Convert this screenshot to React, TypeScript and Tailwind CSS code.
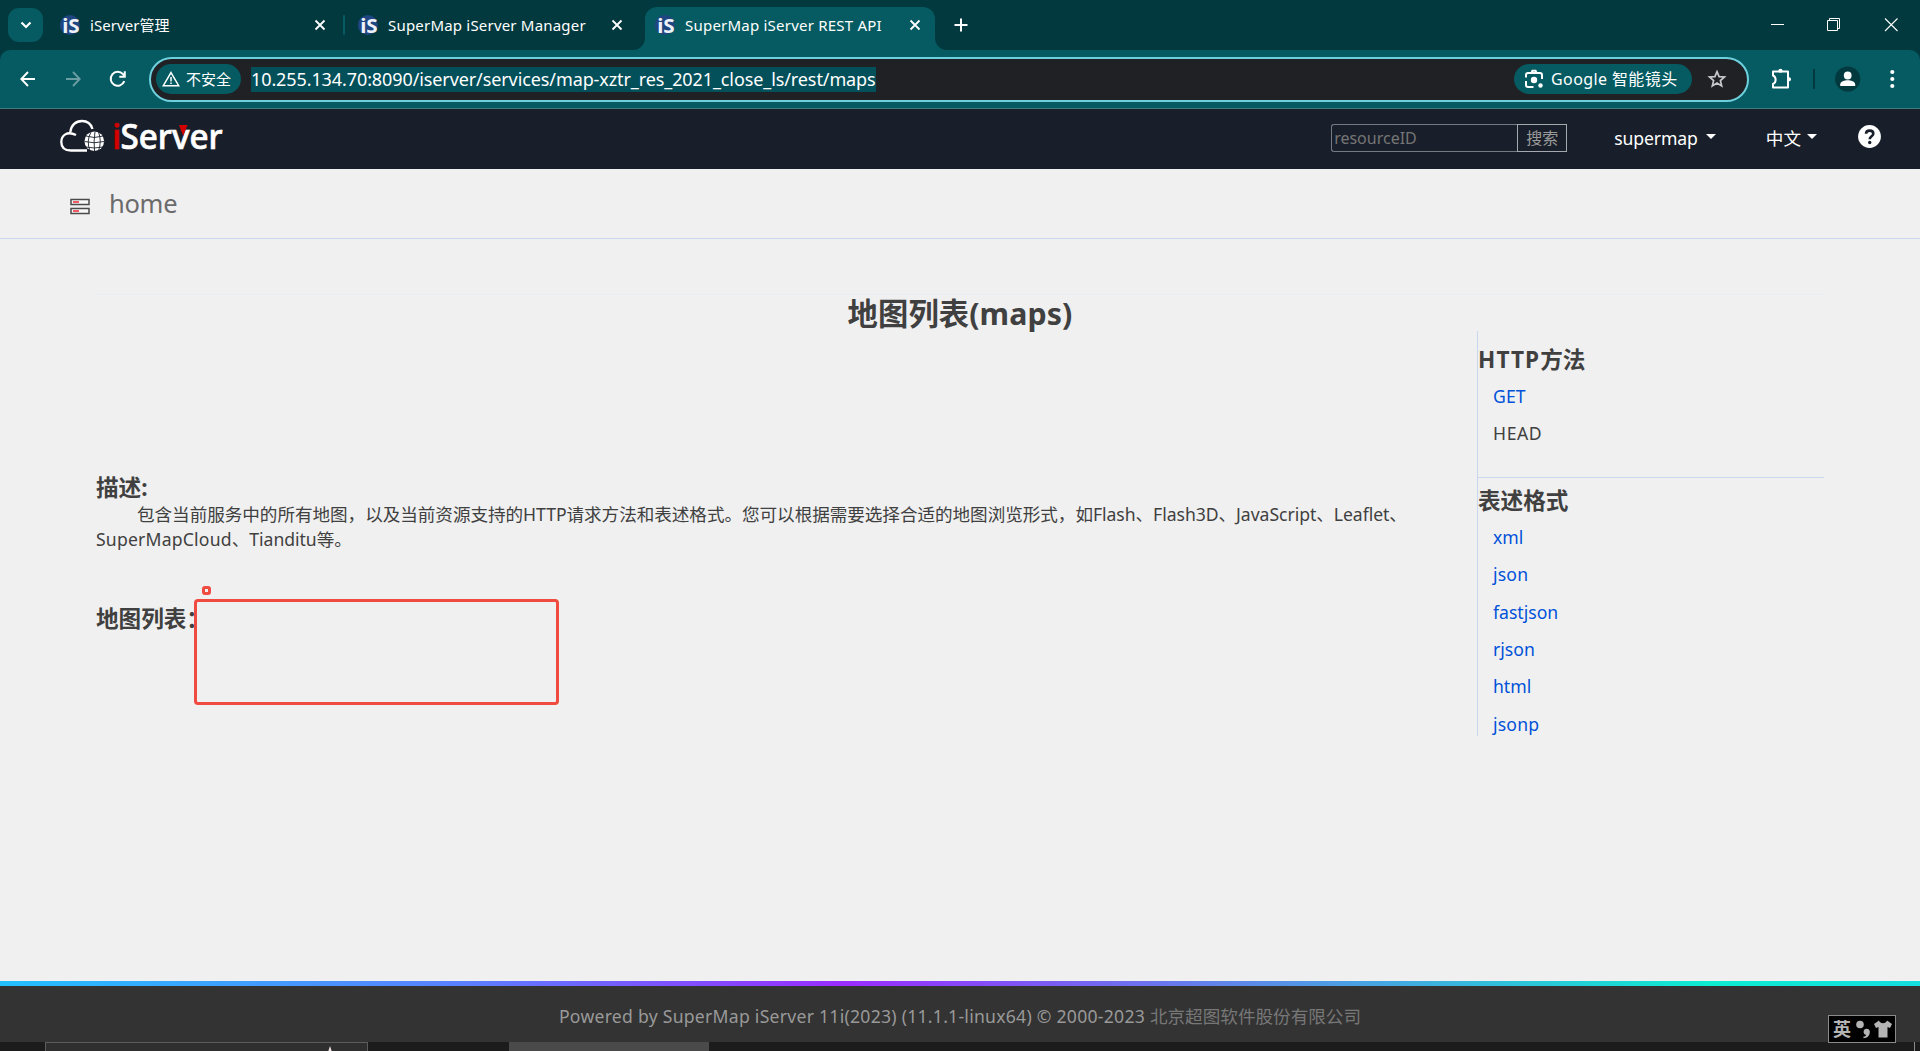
import type { ReactNode } from "react";
import clsx from "clsx";

const tabs = [
  { title: "iServer管理", box: "w-[292px] pl-2 pr-4", text: "tracking-[0.05px]", active: false },
  { title: "SuperMap iServer Manager", box: "w-[301px] pl-[14px] pr-5", text: "tracking-[0.2px]", active: false },
  { title: "SuperMap iServer REST API", box: "w-[290px] pl-[10px] pr-3", text: "tracking-[0.22px]", active: true },
];

const methods = [
  { name: "GET", link: true, text: "tracking-[0.1px]" },
  { name: "HEAD", link: false, text: "tracking-[0.6px]" },
];

const formats = [
  { name: "xml", link: true, text: "" },
  { name: "json", link: true, text: "tracking-[0.2px]" },
  { name: "fastjson", link: true, text: "" },
  { name: "rjson", link: true, text: "" },
  { name: "html", link: true, text: "" },
  { name: "jsonp", link: true, text: "tracking-[0.2px]" },
];

function Favicon() {
  return (
    <svg className="w-5 h-5 shrink-0 overflow-visible" viewBox="0 0 20 20">
      <circle cx="9.8" cy="10" r="10" fill="#1f4680" />
      <text x="2.2" y="18" fontFamily="Noto Sans, sans-serif" fontWeight="700" fontSize="20" fill="#eef2f8" textLength="17.5" lengthAdjust="spacingAndGlyphs">
        iS
      </text>
    </svg>
  );
}

function CloseIcon() {
  return (
    <svg className="w-4 h-4 shrink-0" viewBox="0 0 16 16" stroke="#fff" strokeWidth="1.8">
      <path d="M3.5 3.5l9 9M12.5 3.5l-9 9" />
    </svg>
  );
}

function TabStrip() {
  return (
    <div className="h-[50px] flex items-start">
      <div className="mt-2 ml-2 mr-[9px] w-[35px] h-[34px] rounded-[11px] bg-[#055b61] flex items-center justify-center">
        <svg className="w-3 h-3" viewBox="0 0 12 12" fill="none" stroke="#fff" strokeWidth="2.2">
          <path d="M1.5 3.5L6 8l4.5-4.5" />
        </svg>
      </div>
      {tabs.map((tab, i) => (
        <div key={tab.title} className="flex">
          {i === 1 && <div className="mt-[15px] w-0.5 h-5 -mr-px -ml-px bg-[#055b61] rounded-full" />}
          <div
            className={clsx(
              "relative mt-[7px] h-[43px] pb-[7px] flex items-center text-[15px] text-white",
              tab.box,
              tab.active && "bg-[#055b61] rounded-t-xl"
            )}
          >
            {tab.active && (
              <>
                <svg className="absolute bottom-0 -left-3 w-3 h-3" viewBox="0 0 12 12" fill="#055b61"><path d="M0 12A12 12 0 0 0 12 0V12Z" /></svg>
                <svg className="absolute bottom-0 -right-3 w-3 h-3" viewBox="0 0 12 12" fill="#055b61"><path d="M12 12A12 12 0 0 1 0 0V12Z" /></svg>
              </>
            )}
            <Favicon />
            <span className={clsx("ml-[10px] flex-1 whitespace-nowrap leading-5", tab.text)}>{tab.title}</span>
            <CloseIcon />
          </div>
        </div>
      ))}
      <svg className="mt-[17px] ml-[18px] w-4 h-4" viewBox="0 0 16 16" stroke="#fff" strokeWidth="2">
        <path d="M8 1.5v13M1.5 8h13" />
      </svg>
      <div className="ml-auto mr-[21px] mt-[17px] flex gap-[42px]">
        <svg className="w-[15px] h-4" viewBox="0 0 15 16" stroke="#fff"><path d="M1 7.5h13" /></svg>
        <svg className="w-[15px] h-4" viewBox="0 0 15 16" fill="none" stroke="#fff"><path d="M0.5 3.5h10v10h-10zM2.500 3.500v-2h10v10h-2" /></svg>
        <svg className="w-[15px] h-4" viewBox="0 0 15 16" stroke="#fff" strokeWidth="1.1"><path d="M1 1.500l12.500 12.500M13.500 1.500l-12.500 12.500" /></svg>
      </div>
    </div>
  );
}

function Toolbar() {
  return (
    <div className="h-[59px] rounded-t-[10px] bg-[#055b61] border-b border-[#3f7c80] flex items-center">
      <svg className="ml-5 w-4 h-4" viewBox="0 0 16 16" fill="none" stroke="#fff" strokeWidth="1.9"><path d="M15 8H1.500M8 1L1.300 8 8 15" /></svg>
      <svg className="ml-[29px] w-4 h-4" viewBox="0 0 16 16" fill="none" stroke="#6a9da1" strokeWidth="1.9"><path d="M1 8h13.500M8 1l6.700 7L8 15" /></svg>
      <svg className="ml-7 w-[18px] h-[18px]" viewBox="0 0 18 18" fill="none" stroke="#fff" strokeWidth="2">
        <path d="M15.300 11.200A7 7 0 1 1 14 4.200L15.800 6.200M15.800 1.200V6.700H10.300" />
      </svg>
      <div className="ml-[22px] w-[1600px] h-[45px] rounded-full border-2 border-[#6fd0dd] bg-[#202124] flex items-center pl-[5px] pr-[20px]">
        <div className="w-[85px] h-[30px] rounded-full bg-[#055b61] flex items-center text-white text-[15px]">
          <svg className="ml-[6px] mr-[6px] w-[18px] h-4" viewBox="0 0 18 16" fill="none" stroke="#fff" strokeWidth="1.5">
            <path d="M9 1.600L16.700 14.700H1.300ZM9 6v4.500M9 11.500v1.600" />
          </svg>
          <span className="leading-5">不安全</span>
        </div>
        <span className="ml-[10px] h-[25px] leading-[24px] w-[625px] bg-[#04505a] text-white text-[18px] tracking-[-0.1px] whitespace-nowrap">
          10.255.134.70:8090/iserver/services/map-xztr_res_2021_close_ls/rest/maps
        </span>
        <div className="ml-auto w-[178px] h-[30px] rounded-full bg-[#055b61] flex items-center text-white">
          <svg className="ml-[10px] w-5 h-5" viewBox="0 0 20 20" fill="none" stroke="#fff" strokeWidth="2">
            <path d="M2 8.500V6Q2 4 4 4H16Q18 4 18 6V10M2 12V16Q2 18 4 18H9.500" />
            <path d="M7.500 3L8.500 1.800h3L12.500 3" />
            <circle cx="10" cy="11" r="3.200" fill="#fff" stroke="none" />
            <circle cx="16.500" cy="16.500" r="2.200" fill="#fff" stroke="none" />
          </svg>
          <span className="ml-[7px] text-[16px] tracking-[0.4px] leading-5 whitespace-nowrap">Google 智能镜头</span>
        </div>
        <svg className="ml-[15px] w-5 h-5" viewBox="0 0 20 20" fill="none" stroke="#c7c9cb" strokeWidth="1.700">
          <path d="M10 2.600L12.100 7.600 17.500 8 13.400 11.600 14.700 17 10 14.100 5.300 17 6.600 11.600 2.500 8 7.900 7.600Z" />
        </svg>
      </div>
      <svg className="ml-[21px] w-6 h-6" viewBox="0 0 24 24" fill="none" stroke="#fff" strokeWidth="2">
        <path d="M3 4.500H18V20.500H3V17C6.500 15.500 6.500 10 3 8.500Z" strokeLinejoin="round" />
        <path d="M8.500 4.500a2 2.500 0 0 1 4 0ZM18 10.500a2.500 2 0 0 1 0 4Z" fill="#fff" stroke="none" />
        <circle cx="10.500" cy="3.800" r="2" fill="#fff" stroke="none" />
        <circle cx="19" cy="12.300" r="2" fill="#fff" stroke="none" />
      </svg>
      <div className="ml-[19px] w-0.5 h-5 bg-[#02393e]" />
      <svg className="ml-[20px] w-[26px] h-[26px]" viewBox="0 0 26 26">
        <circle cx="12.700" cy="13" r="12.600" fill="#02393e" />
        <circle cx="12.700" cy="9.500" r="3.900" fill="#fff" />
        <path d="M5.200 20V18.500C5.200 15.500 9.700 14.300 12.700 14.300S20.200 15.500 20.200 18.500V20Z" fill="#fff" />
      </svg>
      <svg className="ml-[28px] w-1.5 h-5" viewBox="0 0 6 20" fill="#fff">
        <circle cx="3.300" cy="3" r="2.100" /><circle cx="3.300" cy="10" r="2.100" /><circle cx="3.300" cy="17" r="2.100" />
      </svg>
    </div>
  );
}

function Logo() {
  return (
    <svg className="mt-[7px] ml-[58px] w-[168px] h-10" viewBox="58 116 168 40" fill="none">
      <path d="M76 135C67 130.500 61.300 135.500 61.300 142 61.300 148 65 150.500 71 150.500H87" stroke="#fff" strokeWidth="2.300" />
      <path d="M70.200 132.500C71 125 76 121 82 121 87 121 91 124 92.500 129" stroke="#fff" strokeWidth="2.300" />
      <circle cx="94.300" cy="141.300" r="9.800" fill="#fff" />
      <g stroke="#191f2a" strokeWidth="0.900">
        <path d="M86 136Q94 139 103 136M84.500 141.500Q94 144 104 141.500M86 147Q94 149 103 147" />
        <path d="M91 132Q86 141 90 151M95 131.500Q93.500 141 94.500 151M98.500 132Q102 141 98.500 151" />
      </g>
      <text y="149" fontFamily="Noto Sans, sans-serif" fontSize="34.500" fontWeight="500" fill="#fff" stroke="#fff" strokeWidth="0.700">
        <tspan x="112" fill="#d40000" stroke="#d40000">i</tspan>
        <tspan x="120.500" textLength="102" lengthAdjust="spacingAndGlyphs">Server</tspan>
      </text>
      <path d="M179 125H187.500L183.200 136Z" fill="#d40000" />
    </svg>
  );
}

function Caret() {
  return <span className="-mt-1 w-0 h-0 border-x-[5px] border-x-transparent border-t-[5px] border-t-white" />;
}

function SiteHeader() {
  return (
    <header className="h-[60px] bg-[#191f2a] flex items-start text-white text-[17.6px]">
      <Logo />
      <div className="ml-auto mt-[15px] flex h-7 text-[16px]">
        <div className="w-[186px] border border-r-0 border-[#767a82] rounded-l-[3px] pl-0.5 leading-[27px] text-[#757575]">resourceID</div>
        <div className="w-[50px] border border-[#a5a8ad] text-center leading-[26px] text-[#9b9b9b]">搜索</div>
      </div>
      <div className="ml-[47px] mt-4 flex items-center gap-2 leading-[26px]">
        <span className="tracking-[-0.1px]">supermap</span>
        <Caret />
      </div>
      <div className="ml-[50px] mt-4 flex items-center gap-[6px] leading-[26px]">
        <span>中文</span>
        <Caret />
      </div>
      <svg className="ml-[41px] mr-[39px] mt-4 w-[23px] h-[23px]" viewBox="0 0 23 23">
        <circle cx="11.500" cy="11.500" r="11.400" fill="#fff" />
        <path d="M8 8.800C8.200 4.500 15.300 4.700 15.300 8.700 15.300 11.200 11.700 11.300 11.700 14.200" fill="none" stroke="#191f2a" strokeWidth="2.600" />
        <circle cx="11.700" cy="17.500" r="1.700" fill="#191f2a" />
      </svg>
    </header>
  );
}

function SideList({ items }: { items: { name: string; link: boolean; text: string }[] }) {
  return (
    <ul className="mt-1 pl-[15px] text-[17.6px] leading-[37.4px]">
      {items.map((item) => (
        <li key={item.name} className={clsx(item.text, item.link && "text-[#0052d9]")}>
          {item.link ? <a href="#">{item.name}</a> : item.name}
        </li>
      ))}
    </ul>
  );
}

function SideTitle({ children }: { children: ReactNode }) {
  return <h3 className="h-7 leading-7 font-bold text-[22.6px]">{children}</h3>;
}

function Taskbar() {
  return (
    <div className="h-[9px] bg-[#1c1c1c] flex overflow-hidden">
      <div className="ml-[45px] w-[323px] border border-b-0 border-[#5c5c5c] bg-[#2f2f2f] flex justify-end">
        <svg className="w-1.5 h-2 mt-[3px] mr-[34px]" viewBox="0 0 6 8"><path d="M3 0L5 6H1Z" fill="#efe3e3" /></svg>
      </div>
      <div className="ml-[141px] w-[200px] bg-[#4a4a4a]" />
      <div className="ml-auto mr-[5px] w-px bg-[#8a8a8a]" />
    </div>
  );
}

function ImeBar() {
  return (
    <div className="absolute left-[1828px] top-[1015px] w-[68px] h-7 bg-black border border-[#8a8a8a] flex items-center text-[#b4b4b4]">
      <span className="ml-1 text-[18px] font-bold leading-6">英</span>
      <svg className="ml-1 w-4 h-5" viewBox="0 0 16 20" fill="#b4b4b4">
        <circle cx="5" cy="5.500" r="3.800" />
        <path d="M14.800 12.500C15 17 12 19 8.500 19.300V17.600C10.300 17.300 11 16.800 11.200 15.900A3.100 3.100 0 1 1 14.800 12.500Z" />
      </svg>
      <svg className="ml-[3px] w-[18px] h-[18px]" viewBox="0 0 18 18" fill="#b4b4b4">
        <path d="M5 0.500C6 4 12 4 13 0.500L18 4 16 8 13.500 7V17.500H4.500V7L2 8 0 4Z" />
      </svg>
    </div>
  );
}

export default function App() {
  return (
    <div className="relative w-[1920px] h-[1051px] overflow-hidden flex flex-col bg-[#f0f0f0] text-[#404040] font-['Noto_Sans','Noto_Sans_CJK_SC',sans-serif]">
      <div className="bg-[#02393e]">
        <TabStrip />
        <Toolbar />
      </div>
      <SiteHeader />

      {/* Breadcrumb */}
      <div className="h-[70px] border-b border-[#c8d6ee] flex items-start">
        <svg className="ml-[70px] mt-[29px] w-5 h-[17px]" viewBox="0 0 20 17" fill="none">
          <path d="M1 1.500H19V6.500H1ZM1 10.500H19V15.500H1Z" stroke="#4a4a4a" strokeWidth="1.500" fill="#f8f8f8" />
          <path d="M3 4H9M3 13H9" stroke="#ee5a62" strokeWidth="1.800" />
        </svg>
        <span className="ml-[19px] mt-4 text-[25.5px] tracking-[-0.3px] leading-9 text-[#6b6b6b]">home</span>
      </div>

      <main className="flex-1 pt-[55px] px-24">
        <h1 className="h-[37px] border-t border-[#e8eef8] text-center text-[30.3px] leading-[37px] font-bold tracking-[0.1px]">地图列表(maps)</h1>
        <div className="flex">
          <div className="w-[1381px] pt-[143px]">
            <h3 className="h-7 leading-7 font-bold text-[22.6px]">描述:</h3>
            <p className="indent-[41px] text-[17.6px] leading-[24.5px] whitespace-nowrap tracking-[-0.045px]">
              包含当前服务中的所有地图，以及当前资源支持的HTTP请求方法和表述格式。您可以根据需要选择合适的地图浏览形式，如Flash、Flash3D、JavaScript、Leaflet、
              <br />
              <span className="tracking-[0.2px]">SuperMapCloud</span>、Tianditu等。
            </p>
            <h3 className="mt-[54px] h-7 leading-7 font-bold text-[22.6px]">地图列表：</h3>
          </div>
          <aside className="w-[347px] h-[405px] border-l border-[#c8d6ee] pt-[15px]">
            <SideTitle><span className="tracking-[1.1px]">HTTP</span>方法</SideTitle>
            <SideList items={methods} />
            <div className="mt-6 mb-[9px] border-t border-[#c8d6ee]" />
            <SideTitle>表述格式</SideTitle>
            <SideList items={formats} />
          </aside>
        </div>
      </main>

      <div className="h-[5px] bg-[linear-gradient(90deg,#22c0ff_0%,#5a80ff_24%,#9a2cff_44%,#5f86ea_64%,#0cecd0_89%,#14dee0_100%)]" />
      <footer className="h-14 pt-[17px] bg-[#333] text-center text-[17.6px] leading-[26px] text-[#999]">
        <span className="tracking-[0.26px]">Powered by SuperMap iServer 11i(2023) (11.1.1-linux64) © 2000-2023 </span>
        <span className="text-[#777]">北京超图软件股份有限公司</span>
      </footer>
      <Taskbar />

      {/* Annotations over the empty list */}
      <div className="absolute left-[194px] top-[599px] w-[365px] h-[106px] border-[3px] border-[#f04b40] rounded-[4px]" />
      <div className="absolute left-[202px] top-[586px] w-[9px] h-[9px] border-[3px] border-[#f04b40] rounded-[3px]" />
      <ImeBar />
    </div>
  );
}
